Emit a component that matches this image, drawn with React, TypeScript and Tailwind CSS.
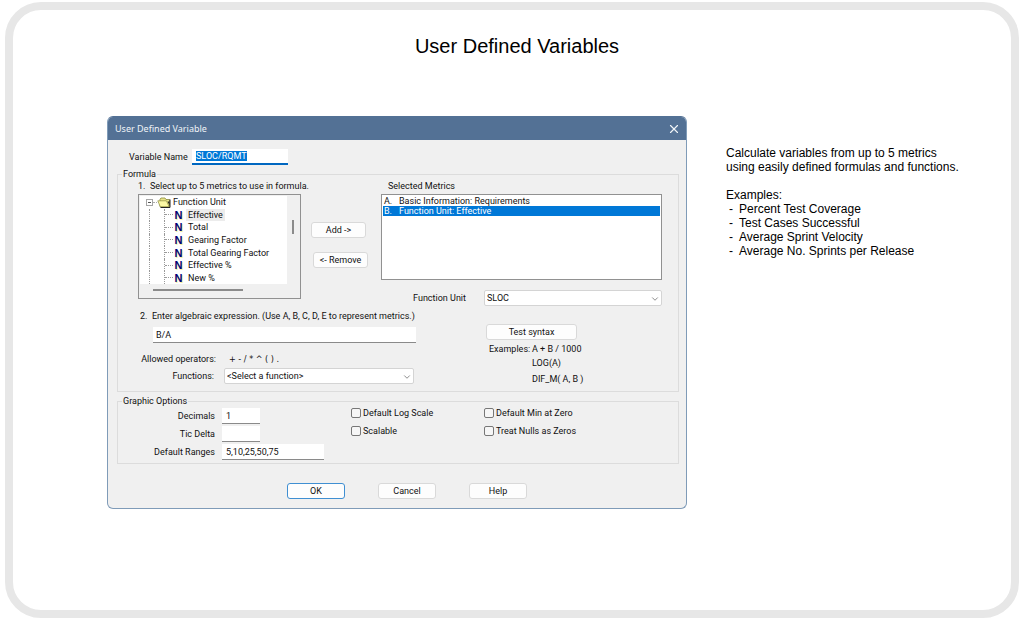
import { useEffect, useRef } from "react";
import type { ReactNode } from "react";
import { ChevronDown, X } from "lucide-react";

const treeItems = [
  "Effective",
  "Total",
  "Gearing Factor",
  "Total Gearing Factor",
  "Effective %",
  "New %",
];

function DialogButton({ children, className = "" }: { children: ReactNode; className?: string }) {
  return (
    <button
      type="button"
      className={`h-4 rounded-[3px] border bg-[#fdfdfd] text-center leading-[14px] whitespace-nowrap ${className}`}
    >
      {children}
    </button>
  );
}

function DropDown({ id, value, className = "" }: { id: string; value: string; className?: string }) {
  return (
    <div className={`relative ${className}`}>
      <select
        id={id}
        className="block h-4 w-full appearance-none rounded-[2px] border border-[#d4d4d4] bg-white pl-[2px] leading-[14px]"
      >
        <option>{value}</option>
      </select>
      <ChevronDown
        className="pointer-events-none absolute top-1 right-[2px] size-[10px] text-[#777]"
        strokeWidth={2}
      />
    </div>
  );
}

function CheckBox({ id, label }: { id: string; label: string }) {
  return (
    <div className="flex h-3 items-center gap-[2px]">
      <input
        id={id}
        type="checkbox"
        className="size-[10px] appearance-none rounded-[2px] border border-[#777] bg-[#f6f6f6]"
      />
      <label htmlFor={id} className="whitespace-nowrap">
        {label}
      </label>
    </div>
  );
}

function FolderIcon() {
  return (
    <svg viewBox="0 0 14 11" className="h-[11px] w-[14px]">
      <path d="M3 9.500V2.200L4 1h4l1 1.500h3.500V9.500z" fill="#e9e58a" stroke="#8a8a3a" strokeWidth="0.8" />
      <path d="M0.800 3.800h8.600l2.800 6H3.300z" fill="#fbf8a5" stroke="#8a8a3a" strokeWidth="0.700" />
      <path d="M13 2.500v8H3.500" fill="none" stroke="#222" strokeWidth="1" />
      <path d="M10.500 4.500l2 4V4.500z" fill="#222" />
    </svg>
  );
}

function MetricTree() {
  return (
    <div className="h-[105px] w-[163px] border border-[#919191] p-px">
      <div className="flex">
        <ul className="grid h-[88px] w-[147px] grid-rows-7 bg-white">
          <li className="flex items-center">
            <span className="ml-[6px] flex size-[7px] items-center justify-center border border-[#a5a5a5]">
              <span className="h-px w-[3px] bg-[#555]" />
            </span>
            <span className="w-1 border-t border-dotted border-[#aaa]" />
            <FolderIcon />
            <span className="ml-[2px]">Function Unit</span>
          </li>
          {treeItems.map((item) => (
            <li key={item} className="flex items-center">
              <span className="ml-[9px] w-[15px] self-stretch border-l border-dotted border-[#999]" />
              <span className="flex w-[9px] items-center self-stretch border-l border-dotted border-[#999]">
                <span className="w-full border-t border-dotted border-[#999]" />
              </span>
              <span className="w-[11px] text-center font-['Liberation_Sans'] text-[11px] leading-3 font-bold text-[#00007c] [text-shadow:1px_1px_0_#f3f09a]">
                N
              </span>
              <span className={item === "Effective" ? "ml-[2px] bg-[#ececec] px-[2px]" : "ml-[2px] px-[2px]"}>
                {item}
              </span>
            </li>
          ))}
        </ul>
        <div className="flex flex-1 justify-center pt-6">
          <div className="h-[14px] w-[2px] bg-[#8b8b8b]" />
        </div>
      </div>
      <div className="mt-[5px] ml-[13px] h-[2px] w-[90px] bg-[#8b8b8b]" />
    </div>
  );
}

function VariableDialog() {
  const nameRef = useRef<HTMLInputElement>(null);

  useEffect(() => {
    nameRef.current?.focus();
    nameRef.current?.select();
  }, []);

  return (
    <section className="max-w-[580px] flex-1 overflow-hidden rounded-[6px] border border-[#7f9bb8] border-t-[#537195] bg-[#f0f0f0] font-[Roboto,sans-serif] text-[9px] leading-3 text-[#111]">
      <header className="flex h-[23px] items-center justify-between bg-[#537195] pr-[5px] pl-[7px] text-[#f0f4f8]">
        <h2 className="font-['Noto_Sans',sans-serif]">User Defined Variable</h2>
        <button type="button" aria-label="Close">
          <X className="size-[14px]" strokeWidth={2} />
        </button>
      </header>

      <form className="pt-[9px] pr-[7px] pb-[9px] pl-[9px]">
        <div className="flex h-4 items-center gap-[9px] pl-3">
          <label htmlFor="variable-name" className="w-[54px] whitespace-nowrap">
            Variable Name
          </label>
          <input
            id="variable-name"
            ref={nameRef}
            defaultValue="SLOC/RQMT"
            className="h-4 w-24 border-b-2 border-[#0067c0] bg-white px-1 outline-none selection:bg-[#0078d7] selection:text-white"
          />
        </div>

        <fieldset className="mt-[3px] border border-[#dcdcdc] pb-[6px]">
          <legend className="ml-1 px-px">Formula</legend>

          <div className="flex pr-4 pl-5">
            <div className="w-[163px]">
              <p className="mb-[2px] whitespace-nowrap">1.&nbsp; Select up to 5 metrics to use in formula.</p>
              <MetricTree />
            </div>

            <div className="ml-[10px] flex w-[57px] flex-col gap-[14px] pt-[42px]">
              <DialogButton className="w-[55px] border-[#d9d9d9]">Add -&gt;</DialogButton>
              <DialogButton className="w-[55px] self-end border-[#d9d9d9]">&lt;- Remove</DialogButton>
            </div>

            <div className="ml-[13px] flex-1">
              <p className="mb-[2px] pl-[7px]">Selected Metrics</p>
              <ul
                role="listbox"
                aria-label="Selected Metrics"
                className="h-[86px] border border-[#919191] bg-white p-px leading-[10px]"
              >
                <li role="option" aria-selected="false" className="flex px-px">
                  <span className="w-[15px]">A.</span>Basic Information: Requirements
                </li>
                <li role="option" aria-selected="true" className="flex bg-[#0078d7] px-px text-white">
                  <span className="w-[15px]">B.</span>Function Unit: Effective
                </li>
              </ul>
              <div className="mt-[10px] flex items-center justify-end gap-[18px]">
                <label htmlFor="function-unit">Function Unit</label>
                <DropDown id="function-unit" value="SLOC" className="w-[178px]" />
              </div>
            </div>
          </div>

          <div className="mt-1 flex gap-[70px] pl-[22px]">
            <div className="w-[276px]">
              <label htmlFor="expression" className="block whitespace-nowrap">
                2.&nbsp; Enter algebraic expression. (Use A, B, C, D, E to represent metrics.)
              </label>
              <div className="mt-[5px] pl-[13px]">
                <input
                  id="expression"
                  defaultValue="B/A"
                  className="block h-4 w-full border-b border-[#8a8a8a] bg-white px-[3px]"
                />
              </div>
              <div className="mt-[10px] flex gap-[13px]">
                <span className="w-[76px] text-right whitespace-nowrap">Allowed operators:</span>
                <span className="font-['DejaVu_Sans_Condensed',sans-serif]">+ - / * ^ ( ) .</span>
              </div>
              <div className="mt-[3px] flex items-center gap-[10px]">
                <label htmlFor="functions" className="w-[74px] text-right">
                  Functions:
                </label>
                <DropDown id="functions" value="<Select a function>" className="w-[190px]" />
              </div>
            </div>

            <div className="pt-[14px]">
              <DialogButton className="w-[91px] border-[#d9d9d9]">Test syntax</DialogButton>
              <div className="mt-[3px] flex pl-[3px] whitespace-nowrap">
                <p className="w-[43px]">Examples:</p>
                <div className="flex flex-col">
                  <span>A + B / 1000</span>
                  <span className="mt-[2px]">LOG(A)</span>
                  <span className="mt-1">DIF_M( A, B )</span>
                </div>
              </div>
            </div>
          </div>
        </fieldset>

        <fieldset className="mt-[3px] border border-[#dcdcdc] pb-[3px]">
          <legend className="ml-1 px-px">Graphic Options</legend>

          <div className="flex">
            <div className="flex w-[233px] flex-col gap-[2px] pt-px">
              <div className="flex items-center gap-[7px]">
                <label htmlFor="decimals" className="w-[97px] text-right">
                  Decimals
                </label>
                <input
                  id="decimals"
                  defaultValue="1"
                  className="h-4 w-[38px] border-b border-[#8a8a8a] bg-white px-1"
                />
              </div>
              <div className="flex items-center gap-[7px]">
                <label htmlFor="tic-delta" className="w-[97px] text-right">
                  Tic Delta
                </label>
                <input id="tic-delta" className="h-4 w-[38px] border-b border-[#8a8a8a] bg-white px-1" />
              </div>
              <div className="flex items-center gap-[7px]">
                <label htmlFor="ranges" className="w-[97px] text-right">
                  Default Ranges
                </label>
                <input
                  id="ranges"
                  defaultValue="5,10,25,50,75"
                  className="h-4 w-[102px] border-b border-[#8a8a8a] bg-white px-1"
                />
              </div>
            </div>

            <div className="flex w-[133px] flex-col gap-[6px]">
              <CheckBox id="log-scale" label="Default Log Scale" />
              <CheckBox id="scalable" label="Scalable" />
            </div>
            <div className="flex flex-col gap-[6px]">
              <CheckBox id="min-zero" label="Default Min at Zero" />
              <CheckBox id="nulls-zero" label="Treat Nulls as Zeros" />
            </div>
          </div>
        </fieldset>

        <div className="mt-[19px] flex justify-center gap-[33px] pl-[18px]">
          <DialogButton className="w-[58px] border-[#3f8fd2]">OK</DialogButton>
          <DialogButton className="w-[58px] border-[#d9d9d9]">Cancel</DialogButton>
          <DialogButton className="w-[58px] border-[#d9d9d9]">Help</DialogButton>
        </div>
      </form>
    </section>
  );
}

export default function App() {
  return (
    <div className="flex min-h-screen bg-white px-[5px] py-[2px] font-['Liberation_Sans',Arial,sans-serif] text-black">
      <main className="flex-1 rounded-[36px] border-8 border-[#e7e7e7] pt-6">
        <h1 className="pl-[10px] text-center text-xl leading-6">User Defined Variables</h1>

        <div className="mt-[58px] flex items-start gap-[39px] pr-[47px] pl-[94px]">
          <VariableDialog />

          <aside className="pt-[30px] text-xs leading-[14px]">
            <p>
              Calculate variables from up to 5 metrics
              <br />
              using easily defined formulas and functions.
            </p>
            <p className="mt-[14px]">Examples:</p>
            <ul>
              <li className="flex gap-[6px] pl-[3px]"><span>-</span>Percent Test Coverage</li>
              <li className="flex gap-[6px] pl-[3px]"><span>-</span>Test Cases Successful</li>
              <li className="flex gap-[6px] pl-[3px]"><span>-</span>Average Sprint Velocity</li>
              <li className="flex gap-[6px] pl-[3px]"><span>-</span>Average No. Sprints per Release</li>
            </ul>
          </aside>
        </div>
      </main>
    </div>
  );
}
